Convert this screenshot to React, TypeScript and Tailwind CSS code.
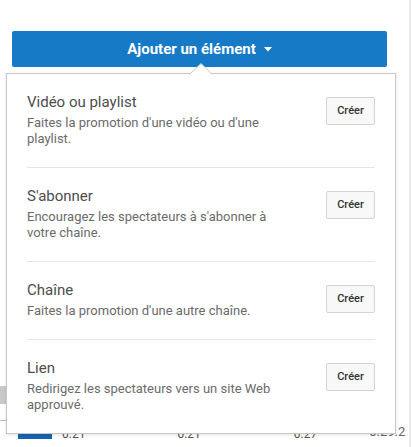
import React from "react";

const items = [
  { title: "Vidéo ou playlist", desc: "Faites la promotion d'une vidéo ou d'une playlist." },
  { title: "S'abonner", desc: "Encouragez les spectateurs à s'abonner à votre chaîne." },
  { title: "Chaîne", desc: "Faites la promotion d'une autre chaîne." },
  { title: "Lien", desc: "Redirigez les spectateurs vers un site Web approuvé." },
];

export default function App() {
  return (
    <div
      className="relative flex h-[447px] w-[411px] overflow-hidden bg-white"
      style={{ fontFamily: "Roboto, 'Noto Sans', Arial, sans-serif" }}
    >
      {/* page underneath */}
      <div className="flex w-[409px] flex-col">
        <div className="ml-[12px] mt-[31px] flex h-[36px] w-[375px] items-center justify-center gap-[8px] rounded-[2px] bg-[#167ac6] text-[15px] font-bold text-white">
          <span>Ajouter un élément</span>
          <svg width="8" height="5" viewBox="0 0 8 5" className="mt-[1px]">
            <path d="M0 0 L8 0 L4 4.5 Z" fill="white" />
          </svg>
        </div>
        <div className="mt-[319px] h-[19px] w-[7px] bg-[#c9c9c9]" />
        <div className="mt-[16px] h-px w-[7px] bg-[#bdbdbd]" />
        <div className="relative mt-[6px] flex h-[20px] items-start text-[12px] leading-[12px] text-[#555]">
          <div className="ml-[18px] mt-[7px] h-[5px] w-[34px] bg-[#1565b2]" />
          <span className="ml-[10px] mt-[1px]">0.21</span>
          <span className="ml-[92px] mt-[1px]">0.21</span>
          <span className="ml-[93px] mt-[1px]">0.27</span>
          <span className="ml-[52px] mt-[-1px] text-[13px] text-[#666]">0.29.2</span>
        </div>
      </div>
      <div className="w-[2px] bg-[#ebebeb]" />

      {/* popup menu */}
      <div className="absolute left-[6px] top-[73px] z-10 w-[390px] border border-[#c8c8c8] bg-white px-[20px] shadow-[0_1px_3px_rgba(0,0,0,0.12)]">
        <svg
          width="24"
          height="12"
          viewBox="0 0 24 12"
          className="absolute left-[182px] top-[-11px]"
        >
          <path d="M0 12 L12 0.5 L24 12" fill="white" stroke="#c8c8c8" strokeWidth="1" />
          <rect x="0" y="11.5" width="24" height="2" fill="white" />
        </svg>
        {items.map((it, i) => (
          <div
            key={it.title}
            className={`flex items-start justify-between pb-[20px] pt-[18px] ${
              i < items.length - 1 ? "border-b border-[#e5e5e5]" : ""
            }`}
          >
            <div className="w-[265px]">
              <div className="text-[15px] leading-[20px] text-[#4d4d4d]">{it.title}</div>
              <div className="mt-[3px] text-[13px] leading-[16px] text-[#6b6b6b]">{it.desc}</div>
            </div>
            <button className="mt-[5px] flex h-[28px] w-[49px] items-center justify-center rounded-[2px] border border-[#d3d3d3] bg-[#f8f8f8] text-[11px] font-medium text-[#333]">
              Créer
            </button>
          </div>
        ))}
      </div>
    </div>
  );
}
